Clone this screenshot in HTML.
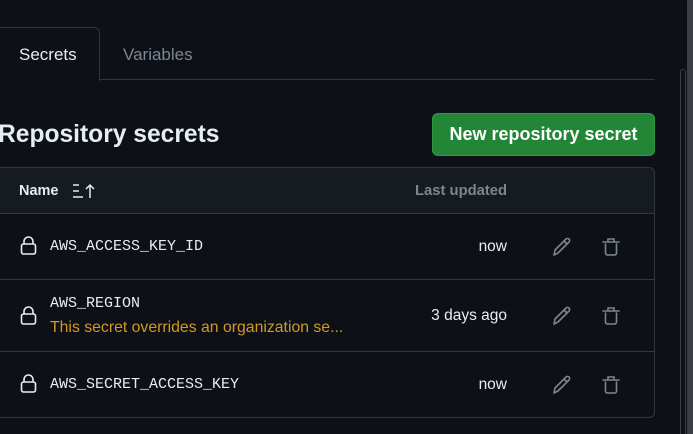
<!DOCTYPE html>
<html><head><style>
*{box-sizing:border-box;margin:0;padding:0}
html,body{width:693px;height:434px;overflow:hidden}
body{background:#0d1117;position:relative;font-family:"Liberation Sans",sans-serif;color:#e6edf3}
.abs{position:absolute}
.tab{left:-2px;top:27px;width:102px;height:54px;border:1px solid #30363d;border-bottom:none;border-radius:0 6px 0 0;background:#0d1117;font-size:17px;padding:17px 0 0 20px;color:#e6edf3}
.line{left:100px;top:79px;width:555px;height:1px;background:#30363d}
.var{left:123px;top:45px;font-size:17px;color:#7d8590}
h2{position:absolute;left:-2px;top:121px;font-size:24.6px;font-weight:bold;color:#e6edf3}
.btn{left:432px;top:113px;width:223px;height:43px;background:#238636;border-radius:6px;border:1px solid #2e9a40;color:#fff;font-weight:bold;font-size:18px;text-align:center;line-height:41px}
.tbl{left:-6px;top:167px;width:661px;height:251px;border:1px solid #30363d;border-radius:6px;overflow:hidden}
.hdr{left:0;top:0;width:100%;height:46px;background:#161b22;border-bottom:1px solid #30363d}
.row{left:0;width:100%;border-bottom:1px solid #30363d}
.mono{font-family:"Liberation Mono",monospace;font-size:15px;color:#e6edf3}
.when{right:186px;font-size:15.5px;color:#e6edf3;text-align:right}
</style></head><body>
<div class="abs tab">Secrets</div>
<div class="abs line"></div>
<div class="abs var">Variables</div>
<h2>Repository secrets</h2>
<div class="abs btn">New repository secret</div>
<div class="abs tbl">
 <div class="abs hdr">
  <div class="abs" style="left:24px;top:15px;font-size:14.5px;font-weight:bold">Name</div>
  <svg class="abs" style="left:77px;top:15px" width="26" height="16" viewBox="0 0 26 16" fill="none" stroke="#e6edf3" stroke-width="1.5"><path d="M1 2h6M1 8h6M1 14h10M18 15V2M14 6l4-4 4 4"/></svg>
  <div class="abs" style="left:420px;top:15px;font-size:14.8px;font-weight:bold;color:#7d8590">Last updated</div>
 </div>
 <div class="abs row" style="top:46px;height:66px"></div>
 <div class="abs row" style="top:112px;height:72px"></div>
</div>
<svg class="abs" style="left:20px;top:236px" width="17" height="19" viewBox="0 0 17 19" fill="none" stroke="#e6edf3" stroke-width="1.6"><rect x="1.5" y="8" width="14" height="10" rx="2"/><path d="M4 8V5.5a4.5 4.5 0 0 1 9 0V8"/></svg>
<div class="abs mono" style="left:50px;top:238px">AWS_ACCESS_KEY_ID</div>
<div class="abs when" style="top:238px">now</div>
<svg class="abs" style="left:20px;top:306px" width="17" height="19" viewBox="0 0 17 19" fill="none" stroke="#e6edf3" stroke-width="1.6"><rect x="1.5" y="8" width="14" height="10" rx="2"/><path d="M4 8V5.5a4.5 4.5 0 0 1 9 0V8"/></svg>
<div class="abs mono" style="left:50px;top:295px">AWS_REGION</div>
<div class="abs" style="left:50px;top:319px;font-size:15.8px;color:#d29922">This secret overrides an organization se...</div>
<div class="abs when" style="top:307px">3 days ago</div>
<svg class="abs" style="left:20px;top:374px" width="17" height="19" viewBox="0 0 17 19" fill="none" stroke="#e6edf3" stroke-width="1.6"><rect x="1.5" y="8" width="14" height="10" rx="2"/><path d="M4 8V5.5a4.5 4.5 0 0 1 9 0V8"/></svg>
<div class="abs mono" style="left:50px;top:376px">AWS_SECRET_ACCESS_KEY</div>
<div class="abs when" style="top:376px">now</div>
<svg width="0" height="0" style="position:absolute"><defs>
<g id="pen" fill="none" stroke="#7d8590" stroke-width="1.6" stroke-linejoin="round"><path d="M2 18l1-5L14 2a2 2 0 0 1 3 3L6 16z M12 4l3 3"/></g>
<g id="bin" fill="none" stroke="#7d8590" stroke-width="1.6" stroke-linecap="round"><path d="M1 5h16M6 5V2h6v3M3.5 7v9a2 2 0 0 0 2 2h7a2 2 0 0 0 2-2V7"/></g>
</defs></svg>
<svg class="abs" style="left:552px;top:237px" width="20" height="20"><use href="#pen"/></svg>
<svg class="abs" style="left:602px;top:237px" width="18" height="20"><use href="#bin"/></svg>
<svg class="abs" style="left:552px;top:306px" width="20" height="20"><use href="#pen"/></svg>
<svg class="abs" style="left:602px;top:306px" width="18" height="20"><use href="#bin"/></svg>
<svg class="abs" style="left:552px;top:375px" width="20" height="20"><use href="#pen"/></svg>
<svg class="abs" style="left:602px;top:375px" width="18" height="20"><use href="#bin"/></svg>
<div class="abs" style="left:687px;top:0;width:6px;height:434px;background:#3a3d41"></div>
<div class="abs" style="left:680px;top:69px;width:6px;height:365px;border:1px solid #3a3f47;border-bottom:none;border-radius:4px 4px 0 0"></div>
</body></html>
